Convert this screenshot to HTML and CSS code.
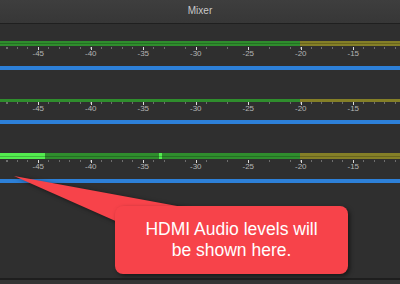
FILE: index.html
```html
<!DOCTYPE html>
<html lang="en">
<head>
  <meta charset="UTF-8" />
  <meta name="viewport" content="width=device-width, initial-scale=1" />
  <title>Mixer</title>
  <link rel="stylesheet" href="styles.css">
</head>
<body>
  <div class="mixer">
    <div class="titlebar">Mixer</div>

    <!-- channel 1 -->
    <div class="channel channel-first">
      <div class="meter meter-stereo"></div>
      <div class="ticks"></div>
      <div class="labels">
        <span>-45</span><span>-40</span><span>-35</span><span>-30</span><span>-25</span><span>-20</span><span>-15</span>
      </div>
      <div class="fader"></div>
    </div>

    <!-- channel 2 -->
    <div class="channel">
      <div class="meter meter-thin"></div>
      <div class="ticks"></div>
      <div class="labels">
        <span>-45</span><span>-40</span><span>-35</span><span>-30</span><span>-25</span><span>-20</span><span>-15</span>
      </div>
      <div class="fader fader-close"></div>
    </div>

    <!-- channel 3 (HDMI) -->
    <div class="channel">
      <div class="meter meter-stereo meter-active">
        <span class="level"></span>
        <span class="peak"></span>
      </div>
      <div class="ticks"></div>
      <div class="labels">
        <span>-45</span><span>-40</span><span>-35</span><span>-30</span><span>-25</span><span>-20</span><span>-15</span>
      </div>
      <div class="fader"></div>
    </div>

    <div class="footer"></div>

    <svg class="pointer" width="400" height="284" viewBox="0 0 400 284">
      <polygon points="14,176 188,208 120,223" />
    </svg>
    <div class="callout">HDMI Audio levels will<br>be shown here.</div>
  </div>
</body>
</html>
```

FILE: styles.css
```css
body { margin: 0; background: #2e2e2e; font-family: "Liberation Sans", Arial, sans-serif; }
.mixer { position: relative; width: 400px; height: 284px; overflow: hidden; background: #2f2f2f; }

.titlebar {
  height: 23px; line-height: 21px; text-align: center;
  font-size: 10px; color: #c9c9c9;
  background: linear-gradient(#3e3e3e, #373737);
  border-bottom: 1px solid #1f1f1f;
}

.channel { display: flex; flex-direction: column; }
.channel .meter { margin-top: 29px; }
.channel-first .meter { margin-top: 17px; }

.meter {
  position: relative; height: 5px;
  background: linear-gradient(to right, #2f8d2d 0 300px, #847f27 300px);
}
.meter-stereo::after {
  content: ""; position: absolute; left: 0; right: 0; top: 2px; height: 1px;
  background: rgba(0, 0, 0, 0.22);
}
.meter-thin { height: 3px; }
.meter-active { height: 6px; }
.meter-active::after { top: 3px; }
.level { position: absolute; left: 0; top: 0; bottom: 0; width: 45px; background: #53ec4f; }
.peak { position: absolute; left: 159px; top: 0; bottom: 0; width: 3px; background: #53ec4f; }

.ticks {
  height: 3px; margin-top: 1px;
  background:
    repeating-linear-gradient(to right, transparent 0 38px, #dcdcdc 38px 39px, transparent 39px 52.5px) 0 0 / 100% 3px no-repeat,
    repeating-linear-gradient(to right, transparent 0 6.5px, #6e6e6e 6.5px 7.5px, transparent 7.5px 10.5px) 0 0 / 100% 2px no-repeat;
}
.meter-thin + .ticks { margin-top: 0; }

.labels { display: flex; padding-left: 12px; height: 8px; font-size: 8px; line-height: 8px; color: #b4b4b4; }
.labels span { flex: none; width: 52.5px; text-align: center; }

.fader { height: 4px; margin-top: 8px; background: #2d80d8; }
.fader-close { margin-top: 7px; }

.footer {
  position: absolute; left: 0; right: 0; bottom: 0; height: 4px;
  background: #343434; border-top: 2px solid #1e1e1e;
}

.pointer { position: absolute; left: 0; top: 0; filter: drop-shadow(1px 1px 2px rgba(0, 0, 0, 0.5)); }
.pointer polygon { fill: #f7434a; }

.callout {
  position: absolute; left: 115px; top: 206px; width: 233px; height: 68px;
  display: flex; align-items: center; justify-content: center; text-align: center;
  background: #f7434a; border-radius: 8px;
  box-shadow: 2px 2px 4px rgba(0, 0, 0, 0.5);
  color: #fff; font-size: 17.5px; line-height: 21px;
}
```
